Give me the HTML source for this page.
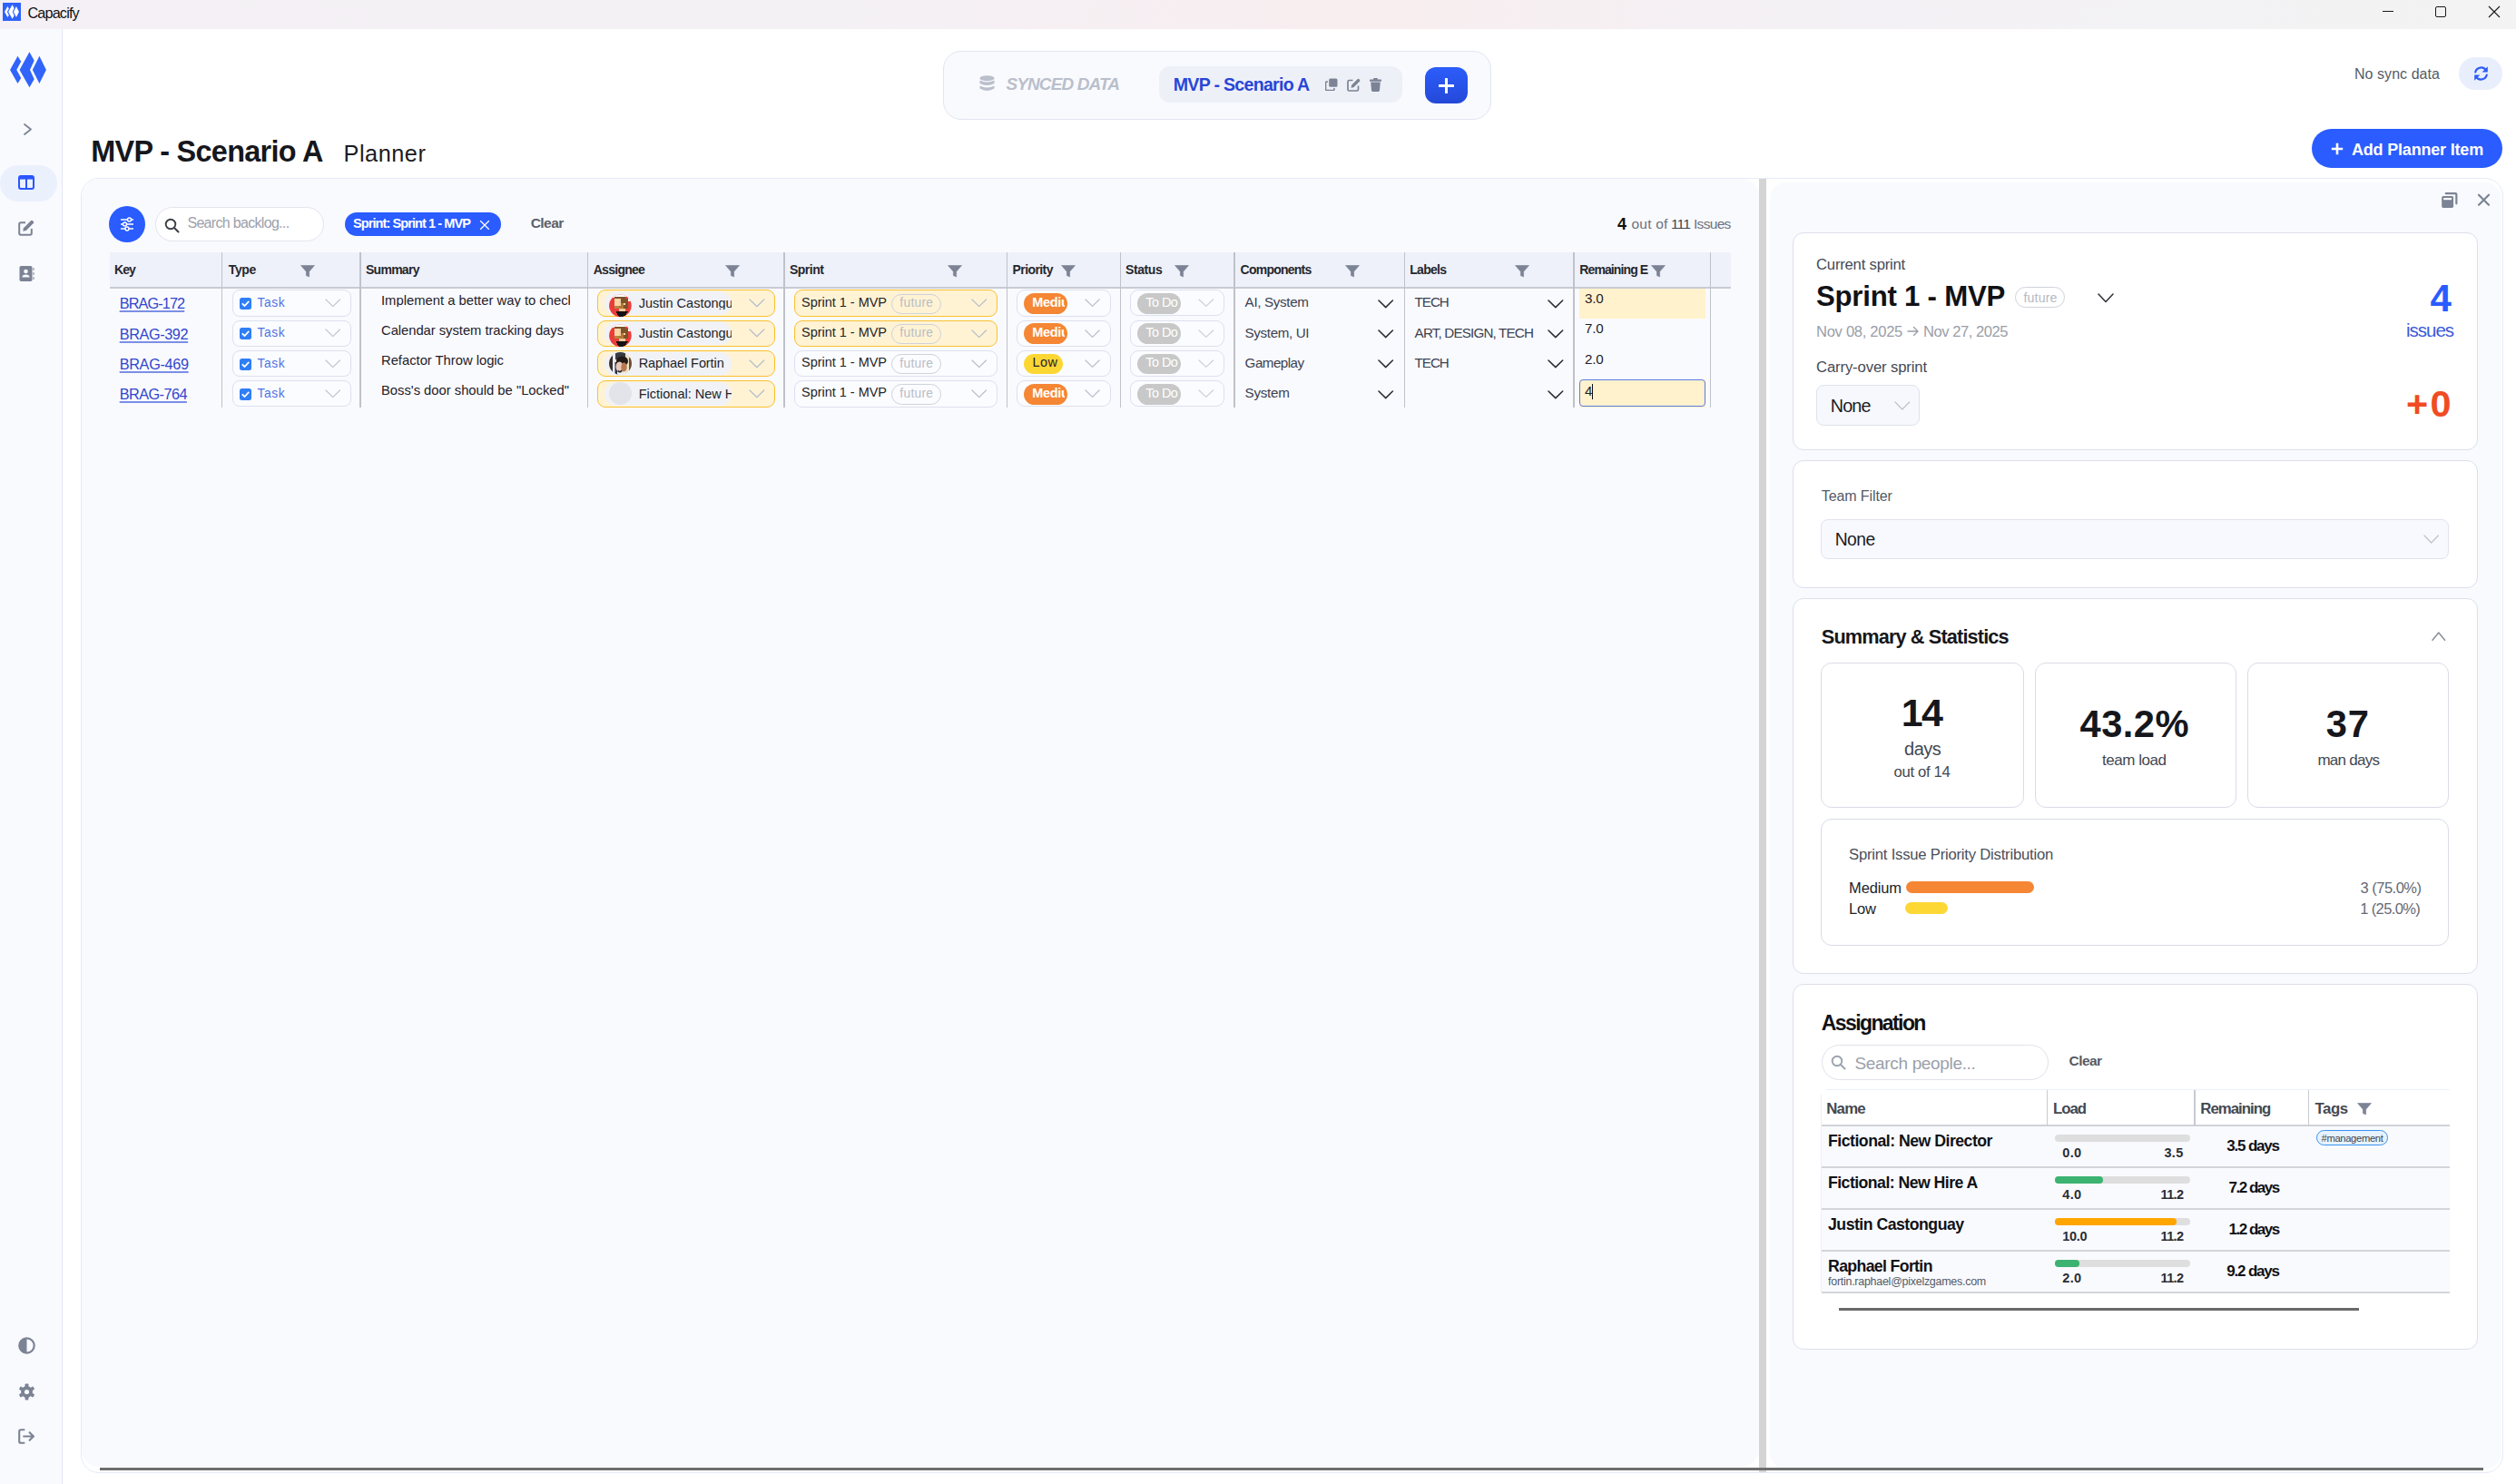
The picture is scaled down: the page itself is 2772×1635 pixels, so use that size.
<!DOCTYPE html>
<html><head><meta charset="utf-8"><title>Capacify</title>
<style>
html,body{margin:0;padding:0;}
body{width:2772px;height:1635px;overflow:hidden;position:relative;background:#ffffff;font-family:"Liberation Sans", sans-serif;}
body>div{position:absolute;white-space:nowrap;}
</style></head><body>
<div style="left:0.00px;top:0.00px;width:2772.00px;height:32.00px;background:linear-gradient(90deg,#f4f0f5 0%,#f4f1f5 33%,#f7eef1 49%,#f8edef 54%,#f6eff2 62%,#f3f1f5 74%,#f3f3f3 100%);"></div>
<div style="left:3.00px;top:3.00px;width:20.00px;height:20.00px;background:#2f62fb;"></div>
<svg style="position:absolute;left:0.00px;top:0.00px;" width="26" height="26" viewBox="0 0 26 26"><g fill="#ffffff" transform="translate(0.58,-1.7) scale(0.4)"><polygon points="19.5,21.8 23.2,27.8 18.3,36.9 23.2,46.1 19.5,52 11.05,36.9"/><polygon points="32.45,17.25 37.7,26.7 33,36.9 37.7,47.2 32.45,56.3 21.56,36.9"/><polygon points="43.4,21.8 50.9,36.9 43.4,52 35.85,36.9"/></g></svg>
<div style="top:6.18px;font-size:16.20px;line-height:16.20px;color:#111111;font-weight:400;letter-spacing:-0.811px;left:30.40px;">Capacify</div>
<div style="left:2624.70px;top:12.00px;width:12.30px;height:1.00px;background:#1a1a1a;"></div>
<div style="left:2683.00px;top:7.00px;width:12.00px;height:12.00px;border:1px solid #1a1a1a;border-radius:2px;box-sizing:border-box;"></div>
<svg style="position:absolute;left:2741.00px;top:6.00px;" width="14" height="14" viewBox="0 0 14 14"><path d="M1 1 L13 13 M13 1 L1 13" stroke="#1a1a1a" stroke-width="1.1"/></svg>
<div style="left:0.00px;top:32.00px;width:68.00px;height:1603.00px;background:#f9fafe;"></div>
<div style="left:68.00px;top:32.00px;width:1.00px;height:1603.00px;background:#e2e6f3;"></div>
<svg style="position:absolute;left:0.00px;top:40.00px;" width="60" height="60" viewBox="0 0 60 60"><g fill="#3064fb"><polygon points="19.5,21.8 23.2,27.8 18.3,36.9 23.2,46.1 19.5,52 11.05,36.9"/><polygon points="32.45,17.25 37.7,26.7 33,36.9 37.7,47.2 32.45,56.3 21.56,36.9"/><polygon points="43.4,21.8 50.9,36.9 43.4,52 35.85,36.9"/></g></svg>
<svg style="position:absolute;left:25.40px;top:135.00px;" width="11.4" height="15" viewBox="0 0 11.4 15"><polyline points="2,2 9,7.5 2,13" fill="none" stroke="#7b8394" stroke-width="1.8" stroke-linecap="round" stroke-linejoin="round"/></svg>
<div style="left:0.00px;top:182.40px;width:62.50px;height:39.40px;background:#ebf0fd;border-radius:20px;"></div>
<svg style="position:absolute;left:20.00px;top:193.00px;" width="18" height="16" viewBox="0 0 18 16"><rect x="1" y="1" width="16" height="14" rx="2" fill="none" stroke="#2b55ff" stroke-width="2"/><rect x="1" y="1" width="16" height="3.6" fill="#2b55ff"/><rect x="8" y="2" width="2" height="13" fill="#2b55ff"/></svg>
<svg style="position:absolute;left:20.00px;top:242.00px;" width="18" height="18" viewBox="0 0 18 18"><path d="M8 3.2 H3 Q1.2 3.2 1.2 5 V15 Q1.2 16.8 3 16.8 H13 Q14.8 16.8 14.8 15 V10" fill="none" stroke="#7b8394" stroke-width="2"/><path d="M5.2 12.8 L6 9.2 L14.2 1 Q15 0.3 15.8 1 L17 2.2 Q17.7 3 17 3.8 L8.8 12 Z" fill="#7b8394"/></svg>
<svg style="position:absolute;left:21.00px;top:293.00px;" width="17" height="17" viewBox="0 0 17 17"><rect x="0.5" y="0" width="14" height="17" rx="1.8" fill="#7b8394"/><circle cx="7.5" cy="6" r="2.3" fill="#f9fafe"/><path d="M3.4 12.6 Q3.4 9.6 7.5 9.6 Q11.6 9.6 11.6 12.6 Z" fill="#f9fafe"/><path d="M16 2 V5 M16 7 V10 M16 12 V15" stroke="#7b8394" stroke-width="1"/></svg>
<svg style="position:absolute;left:19.50px;top:1473.00px;" width="19" height="19" viewBox="0 0 19 19"><circle cx="9.5" cy="9.5" r="8.2" fill="none" stroke="#7b8394" stroke-width="2.2"/><path d="M9.5 1.3 A8.2 8.2 0 0 0 9.5 17.7 Z" fill="#7b8394"/></svg>
<svg style="position:absolute;left:19.50px;top:1523.50px;" width="19" height="19" viewBox="0 0 19 19"><g fill="#7b8394"><circle cx="9.5" cy="9.5" r="6.4"/><rect x="7.6" y="0.5" width="3.8" height="4.5" rx="0.8" transform="rotate(0 9.5 9.5)"/><rect x="7.6" y="0.5" width="3.8" height="4.5" rx="0.8" transform="rotate(60 9.5 9.5)"/><rect x="7.6" y="0.5" width="3.8" height="4.5" rx="0.8" transform="rotate(120 9.5 9.5)"/><rect x="7.6" y="0.5" width="3.8" height="4.5" rx="0.8" transform="rotate(180 9.5 9.5)"/><rect x="7.6" y="0.5" width="3.8" height="4.5" rx="0.8" transform="rotate(240 9.5 9.5)"/><rect x="7.6" y="0.5" width="3.8" height="4.5" rx="0.8" transform="rotate(300 9.5 9.5)"/></g><circle cx="9.5" cy="9.5" r="2.6" fill="#f9fafe"/></svg>
<svg style="position:absolute;left:19.50px;top:1573.50px;" width="19" height="17" viewBox="0 0 19 17"><path d="M6.5 1.2 H3 Q1.2 1.2 1.2 3 V14 Q1.2 15.8 3 15.8 H6.5" fill="none" stroke="#7b8394" stroke-width="2.1" stroke-linecap="round"/><path d="M6.2 8.5 H17 M12.6 4.2 L17 8.5 L12.6 12.8" fill="none" stroke="#7b8394" stroke-width="2.1" stroke-linecap="round" stroke-linejoin="round"/></svg>
<div style="left:1039.00px;top:56.00px;width:604.00px;height:76.00px;background:#f9fafe;border:1px solid #e2e4f0;border-radius:20px;box-sizing:border-box;"></div>
<svg style="position:absolute;left:1079.00px;top:82.50px;" width="17" height="18" viewBox="0 0 17 18"><g fill="#b9bfcb"><ellipse cx="8.5" cy="3.2" rx="8" ry="3"/><path d="M0.5 5.4 Q8.5 9.6 16.5 5.4 V9 Q8.5 13.2 0.5 9 Z"/><path d="M0.5 11.4 Q8.5 15.6 16.5 11.4 V14.6 Q8.5 19.2 0.5 14.6 Z"/></g></svg>
<div style="top:82.91px;font-size:19.00px;line-height:19.00px;color:#b9bfcb;font-weight:700;font-style:italic;letter-spacing:-0.902px;left:1108.50px;">SYNCED DATA</div>
<div style="left:1277.00px;top:73.00px;width:268.00px;height:40.00px;background:#eef0f8;border-radius:12px;"></div>
<div style="top:83.70px;font-size:19.60px;line-height:19.60px;color:#2946d6;font-weight:700;letter-spacing:-0.710px;left:1292.70px;">MVP - Scenario A</div>
<svg style="position:absolute;left:1460.00px;top:86.00px;" width="14" height="14" viewBox="0 0 14 14"><rect x="4.2" y="0.5" width="9.3" height="9.3" rx="1.5" fill="#7b8394"/><path d="M3 4 H1.8 Q0.6 4 0.6 5.2 V12.2 Q0.6 13.4 1.8 13.4 H8.8 Q10 13.4 10 12.2 V11" fill="none" stroke="#7b8394" stroke-width="1.5"/></svg>
<svg style="position:absolute;left:1484.00px;top:86.00px;" width="15" height="15" viewBox="0 0 15 15"><path d="M6.5 2.5 H2.5 Q1 2.5 1 4 V12.5 Q1 14 2.5 14 H11 Q12.5 14 12.5 12.5 V8.5" fill="none" stroke="#7b8394" stroke-width="1.7"/><path d="M4.5 10.8 L5.1 7.8 L11.8 1.1 Q12.5 0.5 13.2 1.1 L14.1 2 Q14.7 2.7 14.1 3.4 L7.4 10.2 Z" fill="#7b8394"/></svg>
<svg style="position:absolute;left:1509.00px;top:85.50px;" width="13" height="15" viewBox="0 0 13 15"><g fill="#7b8394"><rect x="0" y="1.6" width="13" height="2.2" rx="0.6"/><rect x="4.2" y="0" width="4.6" height="2" rx="0.6"/><path d="M1.2 4.6 H11.8 L11 13.6 Q10.9 15 9.6 15 H3.4 Q2.1 15 2 13.6 Z"/></g></svg>
<div style="left:1570.00px;top:74.00px;width:47.00px;height:40.00px;background:linear-gradient(180deg,#2c5dfb,#2449d8);border-radius:12px;"></div>
<svg style="position:absolute;left:1585.00px;top:86.00px;" width="17" height="17" viewBox="0 0 17 17"><path d="M8.5 1 V16 M1 8.5 H16" stroke="#fff" stroke-width="3" stroke-linecap="round"/></svg>
<div style="top:74.45px;font-size:16.00px;line-height:16.00px;color:#565b66;font-weight:400;letter-spacing:0.051px;left:2594.00px;">No sync data</div>
<div style="left:2708.60px;top:62.70px;width:48.80px;height:36.30px;background:#e9eefc;border-radius:18px;"></div>
<svg style="position:absolute;left:2724.00px;top:72.00px;" width="19" height="18" viewBox="0 0 19 18"><g fill="none" stroke="#2f5cf6" stroke-width="2.2" stroke-linecap="round"><path d="M3.2 7.5 A6.6 6.6 0 0 1 15.2 5.6"/><path d="M15.8 10.5 A6.6 6.6 0 0 1 3.8 12.4"/></g><g fill="#2f5cf6"><path d="M16.8 1.2 V7.6 H10.6 Z"/><path d="M2.2 16.8 V10.4 H8.4 Z"/></g></svg>
<div style="top:150.97px;font-size:32.40px;line-height:32.40px;color:#16171c;font-weight:700;letter-spacing:-0.688px;left:100.30px;">MVP - Scenario A</div>
<div style="top:157.38px;font-size:25.30px;line-height:25.30px;color:#1b1c21;font-weight:400;letter-spacing:0.514px;left:378.60px;">Planner</div>
<div style="left:2547.00px;top:142.00px;width:210.40px;height:43.00px;background:#2a5cff;border-radius:22px;"></div>
<svg style="position:absolute;left:2567.50px;top:157.00px;" width="14" height="14" viewBox="0 0 14 14"><path d="M7 0.8 V13.2 M0.8 7 H13.2" stroke="#fff" stroke-width="2.6"/></svg>
<div style="top:155.76px;font-size:18.00px;line-height:18.00px;color:#ffffff;font-weight:700;letter-spacing:-0.189px;left:2591.00px;">Add Planner Item</div>
<div style="left:89.00px;top:196.40px;width:2668.50px;height:1426.40px;background:#ffffff;border:1px solid #e6eaf7;border-radius:20px;box-sizing:border-box;"></div>
<div style="left:90.00px;top:197.40px;width:1847.60px;height:1418.80px;background:#f9fafe;border-radius:19px;"></div>
<div style="left:1950.00px;top:200.80px;width:805.60px;height:1416.80px;background:#f9fafe;border-radius:18px;"></div>
<div style="left:1938.00px;top:197.20px;width:8.00px;height:1424.80px;background:#d4d4d4;"></div>
<div style="left:120.00px;top:227.00px;width:40.00px;height:40.00px;background:#2a5cff;border-radius:50%;"></div>
<svg style="position:absolute;left:130.00px;top:237.00px;" width="20" height="20" viewBox="0 0 20 20"><g stroke="#fff" stroke-width="1.6" fill="none"><path d="M3 5 H17 M3 10 H17 M3 15 H17"/></g><g fill="#2a5cff" stroke="#fff" stroke-width="1.5"><circle cx="12.5" cy="5" r="2"/><circle cx="7.5" cy="10" r="2"/><circle cx="10" cy="15" r="2"/></g></svg>
<div style="left:170.70px;top:227.50px;width:186.30px;height:38.50px;background:#fff;border:1px solid #e3e5ee;border-radius:20px;box-sizing:border-box;"></div>
<svg style="position:absolute;left:180.50px;top:239.50px;" width="17" height="17" viewBox="0 0 17 17"><circle cx="7" cy="7" r="5.3" fill="none" stroke="#3c3f46" stroke-width="1.9"/><path d="M11 11 L15.5 15.5" stroke="#3c3f46" stroke-width="2" stroke-linecap="round"/></svg>
<div style="top:238.05px;font-size:16.00px;line-height:16.00px;color:#9ca1ab;font-weight:400;letter-spacing:-0.684px;left:206.40px;">Search backlog...</div>
<div style="left:380.00px;top:234.00px;width:172.00px;height:26.00px;background:#2a5cff;border-radius:13px;"></div>
<div style="top:239.32px;font-size:14.50px;line-height:14.50px;color:#ffffff;font-weight:700;letter-spacing:-0.911px;left:389.00px;">Sprint: Sprint 1 - MVP</div>
<svg style="position:absolute;left:528.00px;top:241.50px;" width="12" height="12" viewBox="0 0 12 12"><path d="M1.2 1.2 L10.8 10.8 M10.8 1.2 L1.2 10.8" stroke="#fff" stroke-width="1.3"/></svg>
<div style="top:238.48px;font-size:15.50px;line-height:15.50px;color:#5b606b;font-weight:700;letter-spacing:-0.556px;left:584.70px;">Clear</div>
<div style="top:238.26px;font-size:18.00px;line-height:18.00px;color:#111111;font-weight:700;left:1782.00px;">4</div>
<div style="top:239.28px;font-size:15.50px;line-height:15.50px;color:#6b7280;font-weight:400;letter-spacing:0.203px;left:1797.50px;">out of</div>
<div style="top:239.28px;font-size:15.50px;line-height:15.50px;color:#3f434c;font-weight:400;letter-spacing:-0.854px;left:1841.00px;">111</div>
<div style="top:239.28px;font-size:15.50px;line-height:15.50px;color:#6b7280;font-weight:400;letter-spacing:-0.685px;left:1866.00px;">Issues</div>
<div style="left:121.00px;top:278.00px;width:1786.00px;height:38.00px;background:#eef1f9;"></div>
<div style="left:121.00px;top:316.00px;width:1786.00px;height:2.00px;background:#c9cbd3;"></div>
<div style="left:243.60px;top:278.00px;width:1.80px;height:171.00px;background:#bfc2c9;"></div>
<div style="left:396.00px;top:278.00px;width:1.80px;height:171.00px;background:#bfc2c9;"></div>
<div style="left:646.70px;top:278.00px;width:1.80px;height:171.00px;background:#bfc2c9;"></div>
<div style="left:863.30px;top:278.00px;width:1.80px;height:171.00px;background:#bfc2c9;"></div>
<div style="left:1108.50px;top:278.00px;width:1.80px;height:171.00px;background:#bfc2c9;"></div>
<div style="left:1233.50px;top:278.00px;width:1.80px;height:171.00px;background:#bfc2c9;"></div>
<div style="left:1359.10px;top:278.00px;width:1.80px;height:171.00px;background:#bfc2c9;"></div>
<div style="left:1546.60px;top:278.00px;width:1.80px;height:171.00px;background:#bfc2c9;"></div>
<div style="left:1733.10px;top:278.00px;width:1.80px;height:171.00px;background:#bfc2c9;"></div>
<div style="left:1883.60px;top:278.00px;width:1.80px;height:171.00px;background:#bfc2c9;"></div>
<div style="top:290.15px;font-size:14.00px;line-height:14.00px;color:#26272e;font-weight:700;letter-spacing:-0.896px;left:126.00px;">Key</div>
<div style="top:290.15px;font-size:14.00px;line-height:14.00px;color:#26272e;font-weight:700;letter-spacing:-0.410px;left:251.80px;">Type</div>
<svg style="position:absolute;left:331.00px;top:291.60px;" width="16" height="14" viewBox="0 0 16 14"><path d="M0.5 0.5 H15.5 L9.6 7.2 V13 L6.4 11.6 V7.2 Z" fill="#7b8394" stroke="#7b8394" stroke-width="0.6" stroke-linejoin="round"/></svg>
<div style="top:290.15px;font-size:14.00px;line-height:14.00px;color:#26272e;font-weight:700;letter-spacing:-0.730px;left:403.00px;">Summary</div>
<div style="top:290.15px;font-size:14.00px;line-height:14.00px;color:#26272e;font-weight:700;letter-spacing:-0.719px;left:653.70px;">Assignee</div>
<svg style="position:absolute;left:799.00px;top:291.60px;" width="16" height="14" viewBox="0 0 16 14"><path d="M0.5 0.5 H15.5 L9.6 7.2 V13 L6.4 11.6 V7.2 Z" fill="#7b8394" stroke="#7b8394" stroke-width="0.6" stroke-linejoin="round"/></svg>
<div style="top:290.15px;font-size:14.00px;line-height:14.00px;color:#26272e;font-weight:700;letter-spacing:-0.509px;left:870.00px;">Sprint</div>
<svg style="position:absolute;left:1043.50px;top:291.60px;" width="16" height="14" viewBox="0 0 16 14"><path d="M0.5 0.5 H15.5 L9.6 7.2 V13 L6.4 11.6 V7.2 Z" fill="#7b8394" stroke="#7b8394" stroke-width="0.6" stroke-linejoin="round"/></svg>
<div style="top:290.15px;font-size:14.00px;line-height:14.00px;color:#26272e;font-weight:700;letter-spacing:-0.577px;left:1115.50px;">Priority</div>
<svg style="position:absolute;left:1168.80px;top:291.60px;" width="16" height="14" viewBox="0 0 16 14"><path d="M0.5 0.5 H15.5 L9.6 7.2 V13 L6.4 11.6 V7.2 Z" fill="#7b8394" stroke="#7b8394" stroke-width="0.6" stroke-linejoin="round"/></svg>
<div style="top:290.15px;font-size:14.00px;line-height:14.00px;color:#26272e;font-weight:700;letter-spacing:-0.416px;left:1240.00px;">Status</div>
<svg style="position:absolute;left:1293.70px;top:291.60px;" width="16" height="14" viewBox="0 0 16 14"><path d="M0.5 0.5 H15.5 L9.6 7.2 V13 L6.4 11.6 V7.2 Z" fill="#7b8394" stroke="#7b8394" stroke-width="0.6" stroke-linejoin="round"/></svg>
<div style="top:290.15px;font-size:14.00px;line-height:14.00px;color:#26272e;font-weight:700;letter-spacing:-0.776px;left:1366.60px;">Components</div>
<svg style="position:absolute;left:1481.50px;top:291.60px;" width="16" height="14" viewBox="0 0 16 14"><path d="M0.5 0.5 H15.5 L9.6 7.2 V13 L6.4 11.6 V7.2 Z" fill="#7b8394" stroke="#7b8394" stroke-width="0.6" stroke-linejoin="round"/></svg>
<div style="top:290.15px;font-size:14.00px;line-height:14.00px;color:#26272e;font-weight:700;letter-spacing:-0.727px;left:1553.30px;">Labels</div>
<svg style="position:absolute;left:1668.80px;top:291.60px;" width="16" height="14" viewBox="0 0 16 14"><path d="M0.5 0.5 H15.5 L9.6 7.2 V13 L6.4 11.6 V7.2 Z" fill="#7b8394" stroke="#7b8394" stroke-width="0.6" stroke-linejoin="round"/></svg>
<div style="top:290.15px;font-size:14.00px;line-height:14.00px;color:#26272e;font-weight:700;letter-spacing:-0.891px;left:1740.30px;">Remaining E</div>
<svg style="position:absolute;left:1818.80px;top:291.60px;" width="16" height="14" viewBox="0 0 16 14"><path d="M0.5 0.5 H15.5 L9.6 7.2 V13 L6.4 11.6 V7.2 Z" fill="#7b8394" stroke="#7b8394" stroke-width="0.6" stroke-linejoin="round"/></svg>
<div style="top:326.40px;font-size:16.30px;line-height:16.30px;color:#3246cd;font-weight:400;letter-spacing:-0.892px;left:131.70px;text-decoration:underline;text-decoration-color:#7b8fe6;text-underline-offset:2px;text-decoration-thickness:1.5px;">BRAG-172</div>
<div style="left:256.00px;top:319.30px;width:130.50px;height:29.40px;background:#fbfcff;border:1px solid #dde0ee;border-radius:8px;box-sizing:border-box;"></div>
<svg style="position:absolute;left:264.00px;top:328.00px;" width="13" height="13" viewBox="0 0 13 13"><rect width="13" height="13" rx="2.5" fill="#2f7ef6"/><polyline points="3.3,6.8 5.6,9 9.8,4.4" fill="none" stroke="#fff" stroke-width="1.8" stroke-linecap="round" stroke-linejoin="round"/></svg>
<div style="top:327.12px;font-size:13.80px;line-height:13.80px;color:#4d73e3;font-weight:400;letter-spacing:0.531px;left:283.60px;">Task</div>
<svg style="position:absolute;left:357.30px;top:328.00px;" width="19.5" height="11.600000000000023" viewBox="0 0 19.5 11.600000000000023"><polyline points="2,2 9.75,9.600000000000023 17.5,2" fill="none" stroke="#c3c7d0" stroke-width="1.3" stroke-linecap="round" stroke-linejoin="round"/></svg>
<div style="top:323.67px;font-size:14.80px;line-height:14.80px;color:#1f2128;font-weight:400;left:420.00px;width:208.00px;overflow:hidden;">Implement a better way to check</div>
<div style="left:658.20px;top:319.30px;width:195.60px;height:29.50px;background:#fff3d4;border:1.8px solid #fbc02d;border-radius:9px;box-sizing:border-box;"></div>
<div style="left:666.00px;top:321.10px;width:140.00px;height:26.00px;background:#f1f2f6;border-radius:13px;"></div>
<svg style="position:absolute;left:671.00px;top:323.60px;" width="25" height="25" viewBox="0 0 25 25"><defs><clipPath id="cj"><circle cx="12.4" cy="12.7" r="12.3"/></clipPath></defs><g clip-path="url(#cj)" shape-rendering="crispEdges"><rect width="25" height="26" fill="#ea3d3a"/><polygon points="0,0 25,0 25,8 20.65,8 20.65,2.5 6,2.5 6,4.5 0,2" fill="#ffffff"/><rect x="6" y="2.5" width="11.8" height="2.7" fill="#7d5228"/><rect x="13.1" y="5.2" width="7.55" height="10.8" fill="#7d5228"/><rect x="6" y="5.2" width="7.1" height="7.3" fill="#fdd5a5"/><rect x="11" y="5.2" width="2.1" height="7.3" fill="#eccfa5"/><rect x="13.1" y="9.9" width="2.8" height="2.6" fill="#b07535"/><rect x="15.9" y="9.9" width="2.2" height="2.4" fill="#fdd5a5"/><rect x="6" y="12.5" width="5" height="3.5" fill="#b8843f"/><rect x="11" y="12.5" width="4.9" height="3.5" fill="#b07535"/><rect x="15.9" y="12.5" width="4.75" height="3.5" fill="#7d5228"/><rect x="11" y="16" width="7.06" height="3.1" fill="#f0c898"/><path d="M8.15 19.3 H20.65 Q18 25.5 12.5 25 Q9 24 8.15 19.3 Z" fill="#141414"/></g></svg>
<div style="top:326.92px;font-size:14.50px;line-height:14.50px;color:#222428;font-weight:400;left:703.70px;width:102.00px;overflow:hidden;">Justin Castonguay</div>
<svg style="position:absolute;left:824.00px;top:328.20px;" width="19.799999999999955" height="11.700000000000045" viewBox="0 0 19.799999999999955 11.700000000000045"><polyline points="2,2 9.899999999999977,9.700000000000045 17.799999999999955,2" fill="none" stroke="#b8bfcc" stroke-width="1.3" stroke-linecap="round" stroke-linejoin="round"/></svg>
<div style="left:875.40px;top:319.30px;width:223.20px;height:29.50px;background:#fff3d4;border:1.8px solid #fbc02d;border-radius:9px;box-sizing:border-box;"></div>
<div style="top:325.72px;font-size:14.50px;line-height:14.50px;color:#222428;font-weight:400;letter-spacing:-0.020px;left:883.00px;">Sprint 1 - MVP</div>
<div style="left:982.00px;top:323.70px;width:54.60px;height:22.20px;border:1px solid #cfd2da;border-radius:12px;box-sizing:border-box;"></div>
<div style="top:327.22px;font-size:13.80px;line-height:13.80px;color:#b9bdc6;font-weight:400;letter-spacing:0.286px;left:991.30px;">future</div>
<svg style="position:absolute;left:1069.00px;top:328.30px;" width="19.5" height="11.600000000000023" viewBox="0 0 19.5 11.600000000000023"><polyline points="2,2 9.75,9.600000000000023 17.5,2" fill="none" stroke="#b8bfcc" stroke-width="1.3" stroke-linecap="round" stroke-linejoin="round"/></svg>
<div style="left:1120.40px;top:319.30px;width:103.20px;height:29.40px;background:#fbfcff;border:1px solid #dde0ee;border-radius:9px;box-sizing:border-box;"></div>
<div style="left:1127.90px;top:323.10px;width:47.70px;height:22.80px;background:#f58634;border-radius:12px;"></div>
<div style="top:325.82px;font-size:14.50px;line-height:14.50px;color:#ffffff;font-weight:700;letter-spacing:-0.297px;left:1137.20px;width:36.00px;overflow:hidden;">Medium</div>
<svg style="position:absolute;left:1194.40px;top:328.30px;" width="19.09999999999991" height="11.399999999999977" viewBox="0 0 19.09999999999991 11.399999999999977"><polyline points="2,2 9.549999999999955,9.399999999999977 17.09999999999991,2" fill="none" stroke="#b8bfcc" stroke-width="1.3" stroke-linecap="round" stroke-linejoin="round"/></svg>
<div style="left:1245.00px;top:319.30px;width:103.50px;height:29.20px;background:#fbfcff;border:1px solid #dde0ee;border-radius:9px;box-sizing:border-box;"></div>
<div style="left:1253.00px;top:323.10px;width:47.80px;height:22.80px;background:#c8c8c8;border-radius:12px;"></div>
<div style="top:325.82px;font-size:14.50px;line-height:14.50px;color:#ffffff;font-weight:400;letter-spacing:-0.578px;left:1262.30px;">To Do</div>
<svg style="position:absolute;left:1318.70px;top:328.30px;" width="19.59999999999991" height="11.399999999999977" viewBox="0 0 19.59999999999991 11.399999999999977"><polyline points="2,2 9.799999999999955,9.399999999999977 17.59999999999991,2" fill="none" stroke="#cdd1d8" stroke-width="1.3" stroke-linecap="round" stroke-linejoin="round"/></svg>
<div style="top:325.33px;font-size:15.20px;line-height:15.20px;color:#3d4250;font-weight:400;letter-spacing:-0.344px;left:1371.60px;">AI, System</div>
<svg style="position:absolute;left:1517.00px;top:328.80px;" width="19.40000000000009" height="11.699999999999989" viewBox="0 0 19.40000000000009 11.699999999999989"><polyline points="2,2 9.700000000000045,9.699999999999989 17.40000000000009,2" fill="none" stroke="#2d2f36" stroke-width="1.6" stroke-linecap="round" stroke-linejoin="round"/></svg>
<div style="top:325.33px;font-size:15.20px;line-height:15.20px;color:#3d4250;font-weight:400;letter-spacing:-1.036px;left:1558.60px;">TECH</div>
<svg style="position:absolute;left:1704.00px;top:328.80px;" width="19.700000000000045" height="11.699999999999989" viewBox="0 0 19.700000000000045 11.699999999999989"><polyline points="2,2 9.850000000000023,9.699999999999989 17.700000000000045,2" fill="none" stroke="#2d2f36" stroke-width="1.6" stroke-linecap="round" stroke-linejoin="round"/></svg>
<div style="top:359.65px;font-size:16.30px;line-height:16.30px;color:#3246cd;font-weight:400;letter-spacing:-0.417px;left:131.70px;text-decoration:underline;text-decoration-color:#7b8fe6;text-underline-offset:2px;text-decoration-thickness:1.5px;">BRAG-392</div>
<div style="left:256.00px;top:352.55px;width:130.50px;height:29.40px;background:#fbfcff;border:1px solid #dde0ee;border-radius:8px;box-sizing:border-box;"></div>
<svg style="position:absolute;left:264.00px;top:361.25px;" width="13" height="13" viewBox="0 0 13 13"><rect width="13" height="13" rx="2.5" fill="#2f7ef6"/><polyline points="3.3,6.8 5.6,9 9.8,4.4" fill="none" stroke="#fff" stroke-width="1.8" stroke-linecap="round" stroke-linejoin="round"/></svg>
<div style="top:360.37px;font-size:13.80px;line-height:13.80px;color:#4d73e3;font-weight:400;letter-spacing:0.531px;left:283.60px;">Task</div>
<svg style="position:absolute;left:357.30px;top:361.25px;" width="19.5" height="11.600000000000023" viewBox="0 0 19.5 11.600000000000023"><polyline points="2,2 9.75,9.600000000000023 17.5,2" fill="none" stroke="#c3c7d0" stroke-width="1.3" stroke-linecap="round" stroke-linejoin="round"/></svg>
<div style="top:356.92px;font-size:14.80px;line-height:14.80px;color:#1f2128;font-weight:400;letter-spacing:-0.045px;left:420.00px;width:208.00px;overflow:hidden;">Calendar system tracking days</div>
<div style="left:658.20px;top:352.55px;width:195.60px;height:29.50px;background:#fff3d4;border:1.8px solid #fbc02d;border-radius:9px;box-sizing:border-box;"></div>
<div style="left:666.00px;top:354.35px;width:140.00px;height:26.00px;background:#f1f2f6;border-radius:13px;"></div>
<svg style="position:absolute;left:671.00px;top:356.85px;" width="25" height="25" viewBox="0 0 25 25"><defs><clipPath id="cj"><circle cx="12.4" cy="12.7" r="12.3"/></clipPath></defs><g clip-path="url(#cj)" shape-rendering="crispEdges"><rect width="25" height="26" fill="#ea3d3a"/><polygon points="0,0 25,0 25,8 20.65,8 20.65,2.5 6,2.5 6,4.5 0,2" fill="#ffffff"/><rect x="6" y="2.5" width="11.8" height="2.7" fill="#7d5228"/><rect x="13.1" y="5.2" width="7.55" height="10.8" fill="#7d5228"/><rect x="6" y="5.2" width="7.1" height="7.3" fill="#fdd5a5"/><rect x="11" y="5.2" width="2.1" height="7.3" fill="#eccfa5"/><rect x="13.1" y="9.9" width="2.8" height="2.6" fill="#b07535"/><rect x="15.9" y="9.9" width="2.2" height="2.4" fill="#fdd5a5"/><rect x="6" y="12.5" width="5" height="3.5" fill="#b8843f"/><rect x="11" y="12.5" width="4.9" height="3.5" fill="#b07535"/><rect x="15.9" y="12.5" width="4.75" height="3.5" fill="#7d5228"/><rect x="11" y="16" width="7.06" height="3.1" fill="#f0c898"/><path d="M8.15 19.3 H20.65 Q18 25.5 12.5 25 Q9 24 8.15 19.3 Z" fill="#141414"/></g></svg>
<div style="top:360.17px;font-size:14.50px;line-height:14.50px;color:#222428;font-weight:400;left:703.70px;width:102.00px;overflow:hidden;">Justin Castonguay</div>
<svg style="position:absolute;left:824.00px;top:361.45px;" width="19.799999999999955" height="11.700000000000045" viewBox="0 0 19.799999999999955 11.700000000000045"><polyline points="2,2 9.899999999999977,9.700000000000045 17.799999999999955,2" fill="none" stroke="#b8bfcc" stroke-width="1.3" stroke-linecap="round" stroke-linejoin="round"/></svg>
<div style="left:875.40px;top:352.55px;width:223.20px;height:29.50px;background:#fff3d4;border:1.8px solid #fbc02d;border-radius:9px;box-sizing:border-box;"></div>
<div style="top:358.97px;font-size:14.50px;line-height:14.50px;color:#222428;font-weight:400;letter-spacing:-0.020px;left:883.00px;">Sprint 1 - MVP</div>
<div style="left:982.00px;top:356.95px;width:54.60px;height:22.20px;border:1px solid #cfd2da;border-radius:12px;box-sizing:border-box;"></div>
<div style="top:360.47px;font-size:13.80px;line-height:13.80px;color:#b9bdc6;font-weight:400;letter-spacing:0.286px;left:991.30px;">future</div>
<svg style="position:absolute;left:1069.00px;top:361.55px;" width="19.5" height="11.600000000000023" viewBox="0 0 19.5 11.600000000000023"><polyline points="2,2 9.75,9.600000000000023 17.5,2" fill="none" stroke="#b8bfcc" stroke-width="1.3" stroke-linecap="round" stroke-linejoin="round"/></svg>
<div style="left:1120.40px;top:352.55px;width:103.20px;height:29.40px;background:#fbfcff;border:1px solid #dde0ee;border-radius:9px;box-sizing:border-box;"></div>
<div style="left:1127.90px;top:356.35px;width:47.70px;height:22.80px;background:#f58634;border-radius:12px;"></div>
<div style="top:359.07px;font-size:14.50px;line-height:14.50px;color:#ffffff;font-weight:700;letter-spacing:-0.297px;left:1137.20px;width:36.00px;overflow:hidden;">Medium</div>
<svg style="position:absolute;left:1194.40px;top:361.55px;" width="19.09999999999991" height="11.399999999999977" viewBox="0 0 19.09999999999991 11.399999999999977"><polyline points="2,2 9.549999999999955,9.399999999999977 17.09999999999991,2" fill="none" stroke="#b8bfcc" stroke-width="1.3" stroke-linecap="round" stroke-linejoin="round"/></svg>
<div style="left:1245.00px;top:352.55px;width:103.50px;height:29.20px;background:#fbfcff;border:1px solid #dde0ee;border-radius:9px;box-sizing:border-box;"></div>
<div style="left:1253.00px;top:356.35px;width:47.80px;height:22.80px;background:#c8c8c8;border-radius:12px;"></div>
<div style="top:359.07px;font-size:14.50px;line-height:14.50px;color:#ffffff;font-weight:400;letter-spacing:-0.578px;left:1262.30px;">To Do</div>
<svg style="position:absolute;left:1318.70px;top:361.55px;" width="19.59999999999991" height="11.399999999999977" viewBox="0 0 19.59999999999991 11.399999999999977"><polyline points="2,2 9.799999999999955,9.399999999999977 17.59999999999991,2" fill="none" stroke="#cdd1d8" stroke-width="1.3" stroke-linecap="round" stroke-linejoin="round"/></svg>
<div style="top:358.58px;font-size:15.20px;line-height:15.20px;color:#3d4250;font-weight:400;letter-spacing:-0.367px;left:1371.60px;">System, UI</div>
<svg style="position:absolute;left:1517.00px;top:362.05px;" width="19.40000000000009" height="11.699999999999989" viewBox="0 0 19.40000000000009 11.699999999999989"><polyline points="2,2 9.700000000000045,9.699999999999989 17.40000000000009,2" fill="none" stroke="#2d2f36" stroke-width="1.6" stroke-linecap="round" stroke-linejoin="round"/></svg>
<div style="top:358.58px;font-size:15.20px;line-height:15.20px;color:#3d4250;font-weight:400;letter-spacing:-0.829px;left:1558.60px;">ART, DESIGN, TECH</div>
<svg style="position:absolute;left:1704.00px;top:362.05px;" width="19.700000000000045" height="11.699999999999989" viewBox="0 0 19.700000000000045 11.699999999999989"><polyline points="2,2 9.850000000000023,9.699999999999989 17.700000000000045,2" fill="none" stroke="#2d2f36" stroke-width="1.6" stroke-linecap="round" stroke-linejoin="round"/></svg>
<div style="top:392.90px;font-size:16.30px;line-height:16.30px;color:#3246cd;font-weight:400;letter-spacing:-0.342px;left:131.70px;text-decoration:underline;text-decoration-color:#7b8fe6;text-underline-offset:2px;text-decoration-thickness:1.5px;">BRAG-469</div>
<div style="left:256.00px;top:385.80px;width:130.50px;height:29.40px;background:#fbfcff;border:1px solid #dde0ee;border-radius:8px;box-sizing:border-box;"></div>
<svg style="position:absolute;left:264.00px;top:394.50px;" width="13" height="13" viewBox="0 0 13 13"><rect width="13" height="13" rx="2.5" fill="#2f7ef6"/><polyline points="3.3,6.8 5.6,9 9.8,4.4" fill="none" stroke="#fff" stroke-width="1.8" stroke-linecap="round" stroke-linejoin="round"/></svg>
<div style="top:393.62px;font-size:13.80px;line-height:13.80px;color:#4d73e3;font-weight:400;letter-spacing:0.531px;left:283.60px;">Task</div>
<svg style="position:absolute;left:357.30px;top:394.50px;" width="19.5" height="11.600000000000023" viewBox="0 0 19.5 11.600000000000023"><polyline points="2,2 9.75,9.600000000000023 17.5,2" fill="none" stroke="#c3c7d0" stroke-width="1.3" stroke-linecap="round" stroke-linejoin="round"/></svg>
<div style="top:390.17px;font-size:14.80px;line-height:14.80px;color:#1f2128;font-weight:400;letter-spacing:-0.021px;left:420.00px;width:208.00px;overflow:hidden;">Refactor Throw logic</div>
<div style="left:658.20px;top:385.80px;width:195.60px;height:29.50px;background:#fff3d4;border:1.8px solid #fbc02d;border-radius:9px;box-sizing:border-box;"></div>
<div style="left:666.00px;top:387.60px;width:140.00px;height:26.00px;background:#f1f2f6;border-radius:13px;"></div>
<svg style="position:absolute;left:671.00px;top:388.30px;" width="25" height="25" viewBox="0 0 25 25"><defs><clipPath id="cr"><circle cx="12.5" cy="12.5" r="12.4"/></clipPath></defs><g clip-path="url(#cr)"><rect width="25" height="25" fill="#d8d2c8"/><rect x="0" y="0" width="4" height="25" fill="#3a2e2a"/><rect x="4" y="0" width="3.2" height="25" fill="#e9ecf0"/><rect x="6.5" y="11" width="4" height="14" fill="#26304a"/><rect x="18" y="0" width="4" height="25" fill="#efe2c8"/><rect x="22" y="6" width="3" height="19" fill="#6a4a30"/><rect x="7" y="0" width="11" height="8" fill="#3a3a44"/><ellipse cx="14.5" cy="10" rx="6.5" ry="5.5" fill="#231a16"/><ellipse cx="11.5" cy="16" rx="4" ry="5.6" fill="#e8c8b8"/><ellipse cx="16.5" cy="16.5" rx="3.2" ry="5" fill="#b77a4e"/><path d="M9 21 Q12 25 18 21 V25 H9 Z" fill="#f2eee8"/><path d="M10 20.5 Q12 23 14 20" fill="none" stroke="#2a1d18" stroke-width="1.6"/></g></svg>
<div style="top:393.42px;font-size:14.50px;line-height:14.50px;color:#222428;font-weight:400;letter-spacing:-0.079px;left:703.70px;width:102.00px;overflow:hidden;">Raphael Fortin</div>
<svg style="position:absolute;left:824.00px;top:394.70px;" width="19.799999999999955" height="11.700000000000045" viewBox="0 0 19.799999999999955 11.700000000000045"><polyline points="2,2 9.899999999999977,9.700000000000045 17.799999999999955,2" fill="none" stroke="#b8bfcc" stroke-width="1.3" stroke-linecap="round" stroke-linejoin="round"/></svg>
<div style="left:875.40px;top:385.80px;width:223.20px;height:29.50px;background:#fbfcff;border:1px solid #dde0ee;border-radius:9px;box-sizing:border-box;"></div>
<div style="top:392.22px;font-size:14.50px;line-height:14.50px;color:#222428;font-weight:400;letter-spacing:-0.020px;left:883.00px;">Sprint 1 - MVP</div>
<div style="left:982.00px;top:390.20px;width:54.60px;height:22.20px;border:1px solid #cfd2da;border-radius:12px;box-sizing:border-box;"></div>
<div style="top:393.72px;font-size:13.80px;line-height:13.80px;color:#b9bdc6;font-weight:400;letter-spacing:0.286px;left:991.30px;">future</div>
<svg style="position:absolute;left:1069.00px;top:394.80px;" width="19.5" height="11.600000000000023" viewBox="0 0 19.5 11.600000000000023"><polyline points="2,2 9.75,9.600000000000023 17.5,2" fill="none" stroke="#b8bfcc" stroke-width="1.3" stroke-linecap="round" stroke-linejoin="round"/></svg>
<div style="left:1120.40px;top:385.80px;width:103.20px;height:29.40px;background:#fbfcff;border:1px solid #dde0ee;border-radius:9px;box-sizing:border-box;"></div>
<div style="left:1127.90px;top:389.60px;width:42.70px;height:22.80px;background:#fcd734;border-radius:12px;"></div>
<div style="top:392.32px;font-size:14.50px;line-height:14.50px;color:#1f2128;font-weight:400;letter-spacing:0.464px;left:1137.50px;">Low</div>
<svg style="position:absolute;left:1194.40px;top:394.80px;" width="19.09999999999991" height="11.399999999999977" viewBox="0 0 19.09999999999991 11.399999999999977"><polyline points="2,2 9.549999999999955,9.399999999999977 17.09999999999991,2" fill="none" stroke="#b8bfcc" stroke-width="1.3" stroke-linecap="round" stroke-linejoin="round"/></svg>
<div style="left:1245.00px;top:385.80px;width:103.50px;height:29.20px;background:#fbfcff;border:1px solid #dde0ee;border-radius:9px;box-sizing:border-box;"></div>
<div style="left:1253.00px;top:389.60px;width:47.80px;height:22.80px;background:#c8c8c8;border-radius:12px;"></div>
<div style="top:392.32px;font-size:14.50px;line-height:14.50px;color:#ffffff;font-weight:400;letter-spacing:-0.578px;left:1262.30px;">To Do</div>
<svg style="position:absolute;left:1318.70px;top:394.80px;" width="19.59999999999991" height="11.399999999999977" viewBox="0 0 19.59999999999991 11.399999999999977"><polyline points="2,2 9.799999999999955,9.399999999999977 17.59999999999991,2" fill="none" stroke="#cdd1d8" stroke-width="1.3" stroke-linecap="round" stroke-linejoin="round"/></svg>
<div style="top:391.83px;font-size:15.20px;line-height:15.20px;color:#3d4250;font-weight:400;letter-spacing:-0.529px;left:1371.60px;">Gameplay</div>
<svg style="position:absolute;left:1517.00px;top:395.30px;" width="19.40000000000009" height="11.699999999999989" viewBox="0 0 19.40000000000009 11.699999999999989"><polyline points="2,2 9.700000000000045,9.699999999999989 17.40000000000009,2" fill="none" stroke="#2d2f36" stroke-width="1.6" stroke-linecap="round" stroke-linejoin="round"/></svg>
<div style="top:391.83px;font-size:15.20px;line-height:15.20px;color:#3d4250;font-weight:400;letter-spacing:-1.036px;left:1558.60px;">TECH</div>
<svg style="position:absolute;left:1704.00px;top:395.30px;" width="19.700000000000045" height="11.699999999999989" viewBox="0 0 19.700000000000045 11.699999999999989"><polyline points="2,2 9.850000000000023,9.699999999999989 17.700000000000045,2" fill="none" stroke="#2d2f36" stroke-width="1.6" stroke-linecap="round" stroke-linejoin="round"/></svg>
<div style="top:426.15px;font-size:16.30px;line-height:16.30px;color:#3246cd;font-weight:400;letter-spacing:-0.567px;left:131.70px;text-decoration:underline;text-decoration-color:#7b8fe6;text-underline-offset:2px;text-decoration-thickness:1.5px;">BRAG-764</div>
<div style="left:256.00px;top:419.05px;width:130.50px;height:29.40px;background:#fbfcff;border:1px solid #dde0ee;border-radius:8px;box-sizing:border-box;"></div>
<svg style="position:absolute;left:264.00px;top:427.75px;" width="13" height="13" viewBox="0 0 13 13"><rect width="13" height="13" rx="2.5" fill="#2f7ef6"/><polyline points="3.3,6.8 5.6,9 9.8,4.4" fill="none" stroke="#fff" stroke-width="1.8" stroke-linecap="round" stroke-linejoin="round"/></svg>
<div style="top:426.87px;font-size:13.80px;line-height:13.80px;color:#4d73e3;font-weight:400;letter-spacing:0.531px;left:283.60px;">Task</div>
<svg style="position:absolute;left:357.30px;top:427.75px;" width="19.5" height="11.600000000000023" viewBox="0 0 19.5 11.600000000000023"><polyline points="2,2 9.75,9.600000000000023 17.5,2" fill="none" stroke="#c3c7d0" stroke-width="1.3" stroke-linecap="round" stroke-linejoin="round"/></svg>
<div style="top:423.42px;font-size:14.80px;line-height:14.80px;color:#1f2128;font-weight:400;letter-spacing:-0.016px;left:420.00px;width:208.00px;overflow:hidden;">Boss's door should be "Locked"</div>
<div style="left:658.20px;top:419.05px;width:195.60px;height:29.50px;background:#fff3d4;border:1.8px solid #fbc02d;border-radius:9px;box-sizing:border-box;"></div>
<div style="left:666.00px;top:420.85px;width:140.00px;height:26.00px;background:#f1f2f6;border-radius:13px;"></div>
<div style="left:671.00px;top:421.45px;width:25.00px;height:25.00px;background:#e3e4e9;border-radius:50%;"></div>
<div style="top:426.67px;font-size:14.50px;line-height:14.50px;color:#222428;font-weight:400;left:703.70px;width:102.00px;overflow:hidden;">Fictional: New Hire A</div>
<svg style="position:absolute;left:824.00px;top:427.95px;" width="19.799999999999955" height="11.700000000000045" viewBox="0 0 19.799999999999955 11.700000000000045"><polyline points="2,2 9.899999999999977,9.700000000000045 17.799999999999955,2" fill="none" stroke="#b8bfcc" stroke-width="1.3" stroke-linecap="round" stroke-linejoin="round"/></svg>
<div style="left:875.40px;top:419.05px;width:223.20px;height:29.50px;background:#fbfcff;border:1px solid #dde0ee;border-radius:9px;box-sizing:border-box;"></div>
<div style="top:425.47px;font-size:14.50px;line-height:14.50px;color:#222428;font-weight:400;letter-spacing:-0.020px;left:883.00px;">Sprint 1 - MVP</div>
<div style="left:982.00px;top:423.45px;width:54.60px;height:22.20px;border:1px solid #cfd2da;border-radius:12px;box-sizing:border-box;"></div>
<div style="top:426.97px;font-size:13.80px;line-height:13.80px;color:#b9bdc6;font-weight:400;letter-spacing:0.286px;left:991.30px;">future</div>
<svg style="position:absolute;left:1069.00px;top:428.05px;" width="19.5" height="11.600000000000023" viewBox="0 0 19.5 11.600000000000023"><polyline points="2,2 9.75,9.600000000000023 17.5,2" fill="none" stroke="#b8bfcc" stroke-width="1.3" stroke-linecap="round" stroke-linejoin="round"/></svg>
<div style="left:1120.40px;top:419.05px;width:103.20px;height:29.40px;background:#fbfcff;border:1px solid #dde0ee;border-radius:9px;box-sizing:border-box;"></div>
<div style="left:1127.90px;top:422.85px;width:47.70px;height:22.80px;background:#f58634;border-radius:12px;"></div>
<div style="top:425.57px;font-size:14.50px;line-height:14.50px;color:#ffffff;font-weight:700;letter-spacing:-0.297px;left:1137.20px;width:36.00px;overflow:hidden;">Medium</div>
<svg style="position:absolute;left:1194.40px;top:428.05px;" width="19.09999999999991" height="11.399999999999977" viewBox="0 0 19.09999999999991 11.399999999999977"><polyline points="2,2 9.549999999999955,9.399999999999977 17.09999999999991,2" fill="none" stroke="#b8bfcc" stroke-width="1.3" stroke-linecap="round" stroke-linejoin="round"/></svg>
<div style="left:1245.00px;top:419.05px;width:103.50px;height:29.20px;background:#fbfcff;border:1px solid #dde0ee;border-radius:9px;box-sizing:border-box;"></div>
<div style="left:1253.00px;top:422.85px;width:47.80px;height:22.80px;background:#c8c8c8;border-radius:12px;"></div>
<div style="top:425.57px;font-size:14.50px;line-height:14.50px;color:#ffffff;font-weight:400;letter-spacing:-0.578px;left:1262.30px;">To Do</div>
<svg style="position:absolute;left:1318.70px;top:428.05px;" width="19.59999999999991" height="11.399999999999977" viewBox="0 0 19.59999999999991 11.399999999999977"><polyline points="2,2 9.799999999999955,9.399999999999977 17.59999999999991,2" fill="none" stroke="#cdd1d8" stroke-width="1.3" stroke-linecap="round" stroke-linejoin="round"/></svg>
<div style="top:425.08px;font-size:15.20px;line-height:15.20px;color:#3d4250;font-weight:400;letter-spacing:-0.273px;left:1371.60px;">System</div>
<svg style="position:absolute;left:1517.00px;top:428.55px;" width="19.40000000000009" height="11.699999999999989" viewBox="0 0 19.40000000000009 11.699999999999989"><polyline points="2,2 9.700000000000045,9.699999999999989 17.40000000000009,2" fill="none" stroke="#2d2f36" stroke-width="1.6" stroke-linecap="round" stroke-linejoin="round"/></svg>
<svg style="position:absolute;left:1704.00px;top:428.55px;" width="19.700000000000045" height="11.699999999999989" viewBox="0 0 19.700000000000045 11.699999999999989"><polyline points="2,2 9.850000000000023,9.699999999999989 17.700000000000045,2" fill="none" stroke="#2d2f36" stroke-width="1.6" stroke-linecap="round" stroke-linejoin="round"/></svg>
<div style="left:1740.30px;top:317.90px;width:138.70px;height:32.80px;background:#fff2cc;"></div>
<div style="top:321.33px;font-size:15.20px;line-height:15.20px;color:#1f2128;font-weight:400;letter-spacing:-0.208px;left:1745.90px;">3.0</div>
<div style="top:354.43px;font-size:15.20px;line-height:15.20px;color:#1f2128;font-weight:400;letter-spacing:-0.208px;left:1745.90px;">7.0</div>
<div style="top:387.63px;font-size:15.20px;line-height:15.20px;color:#1f2128;font-weight:400;letter-spacing:-0.208px;left:1745.90px;">2.0</div>
<div style="left:1740.30px;top:418.30px;width:138.70px;height:31.20px;background:#fff2cc;"></div>
<div style="left:1740.30px;top:418.30px;width:138.70px;height:29.50px;border:1.5px solid #5b7be8;border-radius:4px;box-sizing:border-box;"></div>
<div style="top:422.63px;font-size:15.20px;line-height:15.20px;color:#1f2128;font-weight:400;left:1745.90px;">4</div>
<div style="left:1754.00px;top:422.50px;width:1.30px;height:17.50px;background:#111;"></div>
<div style="left:110.00px;top:1617.00px;width:2626.00px;height:3.00px;background:#6e6e6e;"></div>
<svg style="position:absolute;left:2688.00px;top:210.00px;" width="22" height="22" viewBox="0 0 22 22"><path d="M6.8 3.2 H17.3 Q18.35 3.2 18.35 4.3 V14.3" fill="none" stroke="#7b8494" stroke-width="2.2" stroke-linecap="round"/><rect x="2.2" y="6.1" width="12.9" height="12.8" rx="1.6" fill="#7b8494"/><rect x="4.2" y="8.1" width="8.9" height="2.1" fill="#ffffff"/></svg>
<svg style="position:absolute;left:2729.00px;top:213.00px;" width="15" height="14" viewBox="0 0 15 14"><path d="M2 1.7 L13 12.7 M13 1.7 L2 12.7" stroke="#7b8494" stroke-width="2.2" stroke-linecap="round"/></svg>
<div style="left:1975.40px;top:256.00px;width:754.30px;height:239.50px;background:#fff;border:1px solid #dcdfeb;border-radius:12px;box-sizing:border-box;"></div>
<div style="left:1975.40px;top:506.50px;width:754.30px;height:141.00px;background:#fff;border:1px solid #dcdfeb;border-radius:12px;box-sizing:border-box;"></div>
<div style="left:1975.40px;top:658.60px;width:754.30px;height:414.90px;background:#fff;border:1px solid #dcdfeb;border-radius:12px;box-sizing:border-box;"></div>
<div style="left:1975.40px;top:1084.40px;width:754.30px;height:402.40px;background:#fff;border:1px solid #dcdfeb;border-radius:12px;box-sizing:border-box;"></div>
<div style="top:284.36px;font-size:16.70px;line-height:16.70px;color:#454a55;font-weight:400;letter-spacing:-0.221px;left:2001.00px;">Current sprint</div>
<div style="top:311.08px;font-size:31.20px;line-height:31.20px;color:#111216;font-weight:700;letter-spacing:-0.243px;left:2001.00px;">Sprint 1 - MVP</div>
<div style="left:2220.00px;top:316.30px;width:54.60px;height:22.50px;border:1px solid #cfd2da;border-radius:12px;box-sizing:border-box;"></div>
<div style="top:321.48px;font-size:14.20px;line-height:14.20px;color:#b5b9c2;font-weight:400;letter-spacing:0.120px;left:2229.50px;">future</div>
<svg style="position:absolute;left:2310.00px;top:321.50px;" width="20" height="12.5" viewBox="0 0 20 12.5"><polyline points="2,2 10.0,10.5 18,2" fill="none" stroke="#34363c" stroke-width="1.6" stroke-linecap="round" stroke-linejoin="round"/></svg>
<div style="top:308.44px;font-size:42.00px;line-height:42.00px;color:#2a5cff;font-weight:700;left:2677.40px;">4</div>
<div style="top:353.64px;font-size:20.50px;line-height:20.50px;color:#3d5bd9;font-weight:400;letter-spacing:-1.018px;left:2651.00px;">issues</div>
<div style="top:357.94px;font-size:16.60px;line-height:16.60px;color:#9a9ea8;font-weight:400;letter-spacing:-0.310px;left:2001.00px;">Nov 08, 2025</div>
<svg style="position:absolute;left:2101.00px;top:359.00px;" width="14" height="12" viewBox="0 0 14 12"><path d="M1 6 H12 M7.5 1.5 L12 6 L7.5 10.5" fill="none" stroke="#9a9ea8" stroke-width="1.4" stroke-linecap="round" stroke-linejoin="round"/></svg>
<div style="top:357.94px;font-size:16.60px;line-height:16.60px;color:#9a9ea8;font-weight:400;letter-spacing:-0.477px;left:2119.00px;">Nov 27, 2025</div>
<div style="top:397.46px;font-size:16.70px;line-height:16.70px;color:#454a55;font-weight:400;letter-spacing:-0.133px;left:2001.00px;">Carry-over sprint</div>
<div style="left:2001.00px;top:424.00px;width:114.00px;height:45.40px;background:#f7f8fd;border:1px solid #dfe2ec;border-radius:8px;box-sizing:border-box;"></div>
<div style="top:437.84px;font-size:19.80px;line-height:19.80px;color:#1a1b1f;font-weight:400;letter-spacing:-0.824px;left:2016.70px;">None</div>
<svg style="position:absolute;left:2086.00px;top:440.50px;" width="19.699999999999818" height="12.0" viewBox="0 0 19.699999999999818 12.0"><polyline points="2,2 9.849999999999909,10.0 17.699999999999818,2" fill="none" stroke="#c0c4cc" stroke-width="1.3" stroke-linecap="round" stroke-linejoin="round"/></svg>
<div style="top:425.45px;font-size:41.40px;line-height:41.40px;color:#f04b23;font-weight:700;letter-spacing:2.398px;left:2651.00px;">+0</div>
<div style="top:539.45px;font-size:16.00px;line-height:16.00px;color:#555a66;font-weight:400;letter-spacing:-0.102px;left:2006.80px;">Team Filter</div>
<div style="left:2006.00px;top:571.70px;width:692.00px;height:44.60px;background:#f8f9fe;border:1px solid #e0e3ee;border-radius:8px;box-sizing:border-box;"></div>
<div style="top:585.46px;font-size:19.30px;line-height:19.30px;color:#1a1b1f;font-weight:400;letter-spacing:-0.527px;left:2021.70px;">None</div>
<svg style="position:absolute;left:2669.00px;top:588.00px;" width="19.40000000000009" height="12" viewBox="0 0 19.40000000000009 12"><polyline points="2,2 9.700000000000045,10 17.40000000000009,2" fill="none" stroke="#c0c4cc" stroke-width="1.3" stroke-linecap="round" stroke-linejoin="round"/></svg>
<div style="top:690.93px;font-size:21.70px;line-height:21.70px;color:#16171c;font-weight:700;letter-spacing:-0.850px;left:2006.80px;">Summary &amp; Statistics</div>
<svg style="position:absolute;left:2677.70px;top:694.70px;" width="17.600000000000364" height="12.299999999999955" viewBox="0 0 17.600000000000364 12.299999999999955"><polyline points="2,10.299999999999955 8.800000000000182,2 15.600000000000364,10.299999999999955" fill="none" stroke="#8a8f99" stroke-width="1.5" stroke-linecap="round" stroke-linejoin="round"/></svg>
<div style="left:2006.00px;top:729.70px;width:224.30px;height:160.30px;background:#fff;border:1px solid #d9dce8;border-radius:12px;box-sizing:border-box;"></div>
<div style="left:2241.60px;top:729.70px;width:222.40px;height:160.30px;background:#fff;border:1px solid #d9dce8;border-radius:12px;box-sizing:border-box;"></div>
<div style="left:2475.70px;top:729.70px;width:222.30px;height:160.30px;background:#fff;border:1px solid #d9dce8;border-radius:12px;box-sizing:border-box;"></div>
<div style="top:763.79px;font-size:43.00px;line-height:43.00px;color:#16171c;font-weight:700;letter-spacing:-1.622px;left:2094.80px;">14</div>
<div style="top:814.67px;font-size:20.00px;line-height:20.00px;color:#444851;font-weight:400;letter-spacing:-0.463px;left:2098.00px;">days</div>
<div style="top:842.86px;font-size:16.70px;line-height:16.70px;color:#444851;font-weight:400;letter-spacing:-0.328px;left:2086.50px;">out of 14</div>
<div style="top:777.09px;font-size:41.70px;line-height:41.70px;color:#16171c;font-weight:700;letter-spacing:0.459px;left:2291.50px;">43.2%</div>
<div style="top:828.61px;font-size:17.00px;line-height:17.00px;color:#444851;font-weight:400;letter-spacing:-0.475px;left:2316.00px;">team load</div>
<div style="top:777.09px;font-size:41.70px;line-height:41.70px;color:#16171c;font-weight:700;letter-spacing:0.812px;left:2562.70px;">37</div>
<div style="top:828.61px;font-size:17.00px;line-height:17.00px;color:#444851;font-weight:400;letter-spacing:-0.713px;left:2553.40px;">man days</div>
<div style="left:2006.00px;top:901.50px;width:692.00px;height:140.50px;background:#fff;border:1px solid #d9dce8;border-radius:12px;box-sizing:border-box;"></div>
<div style="top:933.86px;font-size:16.70px;line-height:16.70px;color:#4a4f5a;font-weight:400;letter-spacing:-0.229px;left:2037.00px;">Sprint Issue Priority Distribution</div>
<div style="top:970.03px;font-size:16.50px;line-height:16.50px;color:#222428;font-weight:400;letter-spacing:-0.115px;left:2037.00px;">Medium</div>
<div style="left:2099.70px;top:971.00px;width:141.30px;height:13.00px;background:#f58634;border-radius:7px;"></div>
<div style="top:992.73px;font-size:16.50px;line-height:16.50px;color:#222428;font-weight:400;letter-spacing:-0.194px;left:2037.00px;">Low</div>
<div style="left:2098.70px;top:994.00px;width:47.00px;height:12.60px;background:#fdd835;border-radius:7px;"></div>
<div style="top:970.03px;font-size:16.50px;line-height:16.50px;color:#666a74;font-weight:400;letter-spacing:-0.505px;right:104.50px;text-align:right;">3 (75.0%)</div>
<div style="top:992.73px;font-size:16.50px;line-height:16.50px;color:#666a74;font-weight:400;letter-spacing:-0.616px;right:105.80px;text-align:right;">1 (25.0%)</div>
<div style="top:1116.13px;font-size:23.00px;line-height:23.00px;color:#111216;font-weight:700;letter-spacing:-1.602px;left:2006.80px;">Assignation</div>
<div style="left:2007.00px;top:1150.50px;width:249.50px;height:39.50px;background:#fff;border:1px solid #dfe2ea;border-radius:20px;box-sizing:border-box;"></div>
<svg style="position:absolute;left:2017.00px;top:1162.00px;" width="17" height="17" viewBox="0 0 17 17"><circle cx="7" cy="7" r="5.3" fill="none" stroke="#9ca3af" stroke-width="1.9"/><path d="M11 11 L15.5 15.5" stroke="#9ca3af" stroke-width="2" stroke-linecap="round"/></svg>
<div style="top:1161.51px;font-size:19.00px;line-height:19.00px;color:#9aa0aa;font-weight:400;letter-spacing:-0.336px;left:2043.50px;">Search people...</div>
<div style="top:1161.28px;font-size:15.50px;line-height:15.50px;color:#555a65;font-weight:700;letter-spacing:-0.556px;left:2279.60px;">Clear</div>
<div style="left:2006.80px;top:1201.00px;width:691.90px;height:38.00px;background:#ffffff;"></div>
<div style="left:2012.00px;top:1200.00px;width:686.70px;height:1.00px;background:#edf0f8;"></div>
<div style="left:2006.00px;top:1206.00px;width:1.00px;height:218.00px;background:#edf0f8;"></div>
<div style="left:2006.80px;top:1239.00px;width:691.90px;height:2.00px;background:#d0d2d8;"></div>
<div style="left:2254.60px;top:1201.00px;width:1.60px;height:39.00px;background:#c8cad2;"></div>
<div style="left:2417.20px;top:1201.00px;width:1.60px;height:39.00px;background:#c8cad2;"></div>
<div style="left:2542.70px;top:1201.00px;width:1.60px;height:39.00px;background:#c8cad2;"></div>
<div style="top:1213.78px;font-size:16.80px;line-height:16.80px;color:#444851;font-weight:700;letter-spacing:-0.805px;left:2012.30px;">Name</div>
<div style="top:1213.78px;font-size:16.80px;line-height:16.80px;color:#444851;font-weight:700;letter-spacing:-1.023px;left:2262.00px;">Load</div>
<div style="top:1213.78px;font-size:16.80px;line-height:16.80px;color:#444851;font-weight:700;letter-spacing:-0.977px;left:2424.30px;">Remaining</div>
<div style="top:1213.78px;font-size:16.80px;line-height:16.80px;color:#444851;font-weight:700;letter-spacing:-0.480px;left:2550.50px;">Tags</div>
<svg style="position:absolute;left:2597.00px;top:1214.50px;" width="16" height="14" viewBox="0 0 16 14"><path d="M0.5 0.5 H15.5 L9.6 7.2 V13 L6.4 11.6 V7.2 Z" fill="#7b8394" stroke="#7b8394" stroke-width="0.6" stroke-linejoin="round"/></svg>
<div style="left:2006.80px;top:1241.00px;width:691.90px;height:44.00px;background:#f9fafe;"></div>
<div style="left:2006.80px;top:1284.90px;width:691.90px;height:2.40px;background:#d3d5da;"></div>
<div style="top:1249.31px;font-size:17.70px;line-height:17.70px;color:#111216;font-weight:700;letter-spacing:-0.506px;left:2014.00px;">Fictional: New Director</div>
<div style="left:2264.00px;top:1250.00px;width:148.70px;height:7.50px;background:#dedede;border-radius:4px;"></div>
<div style="top:1262.72px;font-size:14.50px;line-height:14.50px;color:#2b2d33;font-weight:700;letter-spacing:0.276px;left:2272.30px;">0.0</div>
<div style="top:1262.72px;font-size:14.50px;line-height:14.50px;color:#2b2d33;font-weight:700;letter-spacing:0.276px;right:366.50px;text-align:right;">3.5</div>
<div style="top:1253.61px;font-size:17.00px;line-height:17.00px;color:#111216;font-weight:700;letter-spacing:-1.189px;left:2453.30px;">3.5 days</div>
<div style="left:2006.80px;top:1287.10px;width:691.90px;height:44.00px;background:#f9fafe;"></div>
<div style="left:2006.80px;top:1331.00px;width:691.90px;height:2.40px;background:#d3d5da;"></div>
<div style="top:1295.31px;font-size:17.70px;line-height:17.70px;color:#111216;font-weight:700;letter-spacing:-0.550px;left:2014.00px;">Fictional: New Hire A</div>
<div style="left:2264.00px;top:1296.10px;width:148.70px;height:7.50px;background:#dedede;border-radius:4px;"></div>
<div style="left:2264.00px;top:1296.10px;width:53.20px;height:7.50px;background:#3cb371;border-radius:4px;"></div>
<div style="top:1308.82px;font-size:14.50px;line-height:14.50px;color:#2b2d33;font-weight:700;letter-spacing:0.276px;left:2272.30px;">4.0</div>
<div style="top:1308.82px;font-size:14.50px;line-height:14.50px;color:#2b2d33;font-weight:700;letter-spacing:-0.605px;right:366.50px;text-align:right;">11.2</div>
<div style="top:1299.71px;font-size:17.00px;line-height:17.00px;color:#111216;font-weight:700;letter-spacing:-1.514px;left:2455.60px;">7.2 days</div>
<div style="left:2006.80px;top:1333.20px;width:691.90px;height:44.00px;background:#f9fafe;"></div>
<div style="left:2006.80px;top:1377.10px;width:691.90px;height:2.40px;background:#d3d5da;"></div>
<div style="top:1341.31px;font-size:17.70px;line-height:17.70px;color:#111216;font-weight:700;letter-spacing:-0.508px;left:2014.00px;">Justin Castonguay</div>
<div style="left:2264.00px;top:1342.20px;width:148.70px;height:7.50px;background:#dedede;border-radius:4px;"></div>
<div style="left:2264.00px;top:1342.20px;width:133.60px;height:7.50px;background:#ffa500;border-radius:4px;"></div>
<div style="top:1354.92px;font-size:14.50px;line-height:14.50px;color:#2b2d33;font-weight:700;letter-spacing:-0.309px;left:2272.30px;">10.0</div>
<div style="top:1354.92px;font-size:14.50px;line-height:14.50px;color:#2b2d33;font-weight:700;letter-spacing:-0.605px;right:366.50px;text-align:right;">11.2</div>
<div style="top:1345.81px;font-size:17.00px;line-height:17.00px;color:#111216;font-weight:700;letter-spacing:-1.514px;left:2455.60px;">1.2 days</div>
<div style="left:2006.80px;top:1379.30px;width:691.90px;height:44.00px;background:#f9fafe;"></div>
<div style="left:2006.80px;top:1423.20px;width:691.90px;height:1.90px;background:#d3d5da;"></div>
<div style="top:1387.31px;font-size:17.70px;line-height:17.70px;color:#111216;font-weight:700;letter-spacing:-0.645px;left:2014.00px;">Raphael Fortin</div>
<div style="left:2264.00px;top:1388.30px;width:148.70px;height:7.50px;background:#dedede;border-radius:4px;"></div>
<div style="left:2264.00px;top:1388.30px;width:26.80px;height:7.50px;background:#3cb371;border-radius:4px;"></div>
<div style="top:1401.02px;font-size:14.50px;line-height:14.50px;color:#2b2d33;font-weight:700;letter-spacing:0.276px;left:2272.30px;">2.0</div>
<div style="top:1401.02px;font-size:14.50px;line-height:14.50px;color:#2b2d33;font-weight:700;letter-spacing:-0.605px;right:366.50px;text-align:right;">11.2</div>
<div style="top:1391.91px;font-size:17.00px;line-height:17.00px;color:#111216;font-weight:700;letter-spacing:-1.189px;left:2453.30px;">9.2 days</div>
<div style="left:2552.00px;top:1245.30px;width:78.60px;height:16.50px;background:#e6f2fd;border:1.3px solid #3793f0;border-radius:10px;box-sizing:border-box;"></div>
<div style="top:1249.02px;font-size:11.20px;line-height:11.20px;color:#40454f;font-weight:400;letter-spacing:-0.321px;left:2557.50px;">#management</div>
<div style="top:1406.02px;font-size:12.50px;line-height:12.50px;color:#555a65;font-weight:400;letter-spacing:-0.274px;left:2014.00px;">fortin.raphael@pixelzgames.com</div>
<div style="left:2025.70px;top:1441.00px;width:573.50px;height:2.60px;background:#6a6a6a;"></div>
</body></html>
